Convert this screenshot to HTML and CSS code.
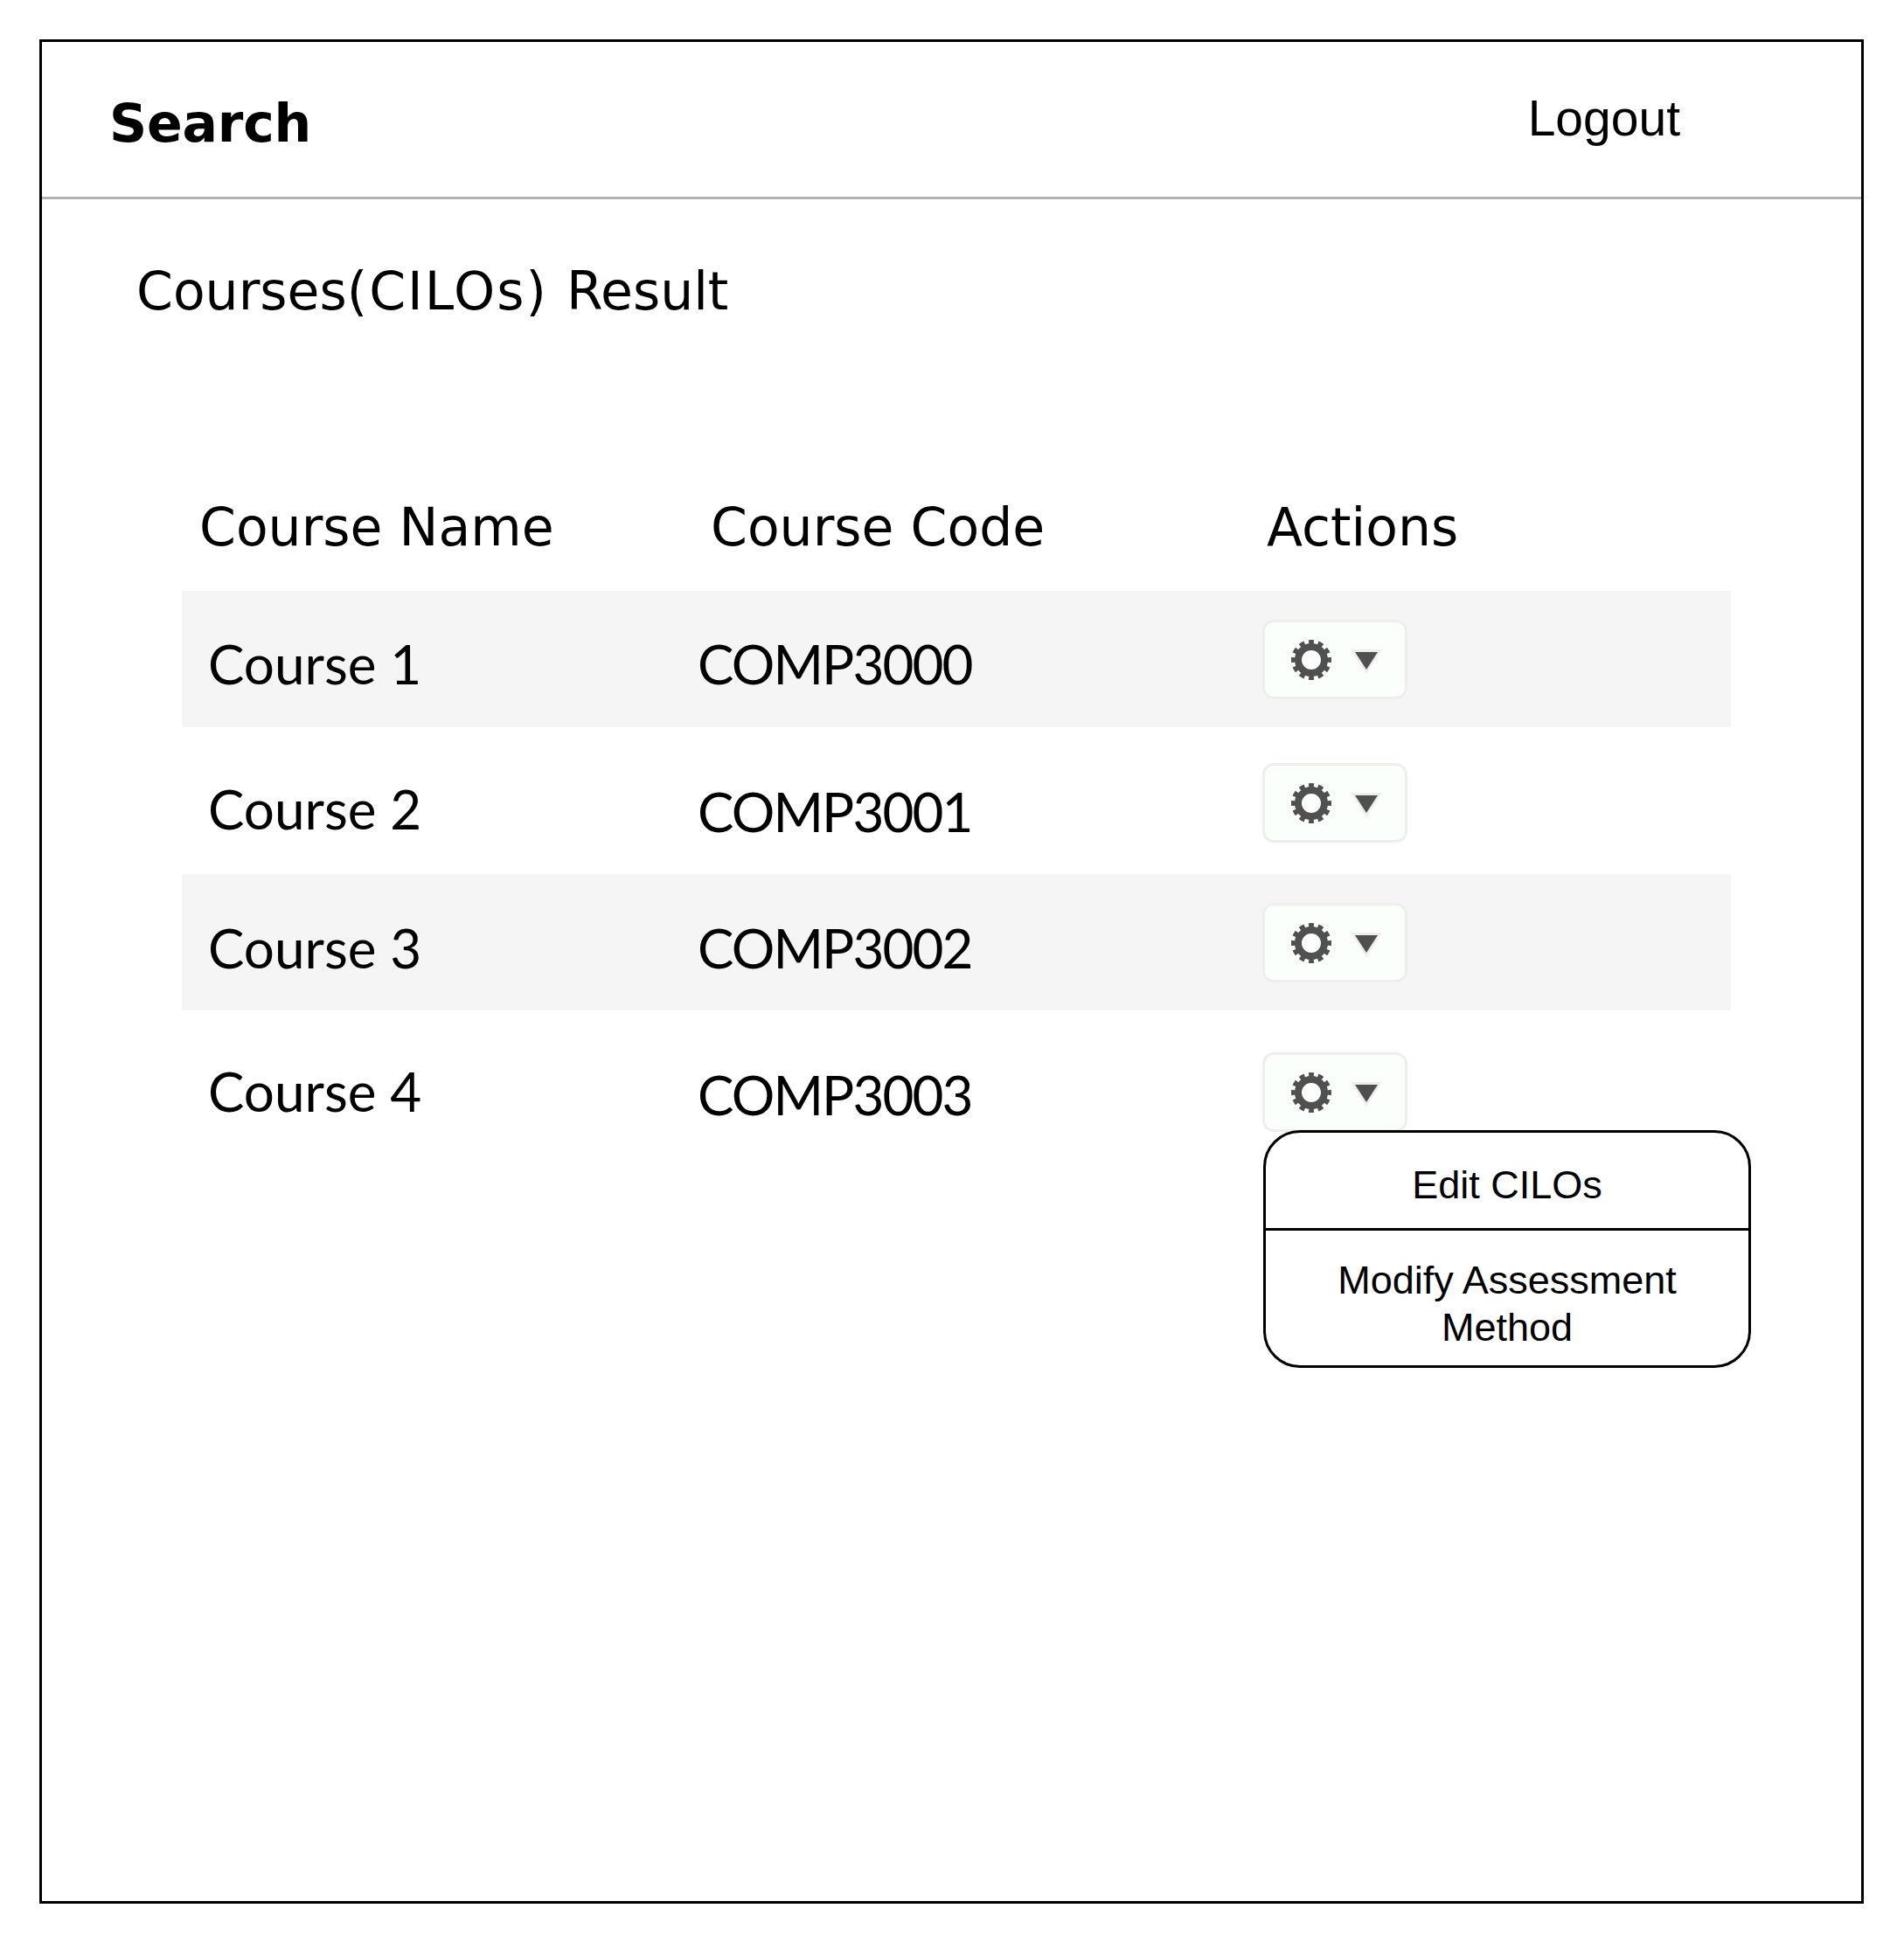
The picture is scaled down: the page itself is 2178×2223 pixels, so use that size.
FILE: index.html
```html
<!DOCTYPE html>
<html lang="en">
<head>
  <meta charset="UTF-8" />
  <meta name="viewport" content="width=device-width, initial-scale=1.0"/>
  <title>Courses Result</title>
  <link rel="stylesheet" href="styles.css">
</head>
<body>

  <svg class="defs" width="0" height="0">
    <symbol id="gear" viewBox="0 0 48 48">
      <circle cx="24" cy="24" r="15" fill="none" stroke="#505050" stroke-width="8"/>
      <circle cx="24" cy="24" r="20.5" fill="none" stroke="#505050" stroke-width="5" pathLength="120" stroke-dasharray="5.6 4.4" stroke-dashoffset="2.8" transform="rotate(-90 24 24)"/>
    </symbol>
    <symbol id="caret" viewBox="0 0 36 30">
      <polygon points="0,1 36,1 18,29" fill="#eeeeee"/>
      <polygon points="5,4 31,4 18,24" fill="#505050"/>
    </symbol>
  </svg>

  <div class="frame">
    <header class="topbar">
      <div class="brand">Search</div>
      <a class="logout">Logout</a>
    </header>

    <h1 class="page-title">Courses<span class="title-paren">(CILOs)</span> Result</h1>

    <div class="table">
      <div class="table-head">
        <div class="col-name">Course Name</div>
        <div class="col-code">Course Code</div>
        <div class="col-actions">Actions</div>
      </div>

      <div class="row row-1 striped">
        <div class="cell-name">Course 1</div>
        <div class="cell-code">COMP3000</div>
        <div class="cell-actions">
          <button class="gear-btn"><svg class="gear"><use href="#gear"/></svg><svg class="caret"><use href="#caret"/></svg></button>
        </div>
      </div>

      <div class="row row-2">
        <div class="cell-name">Course 2</div>
        <div class="cell-code">COMP3001</div>
        <div class="cell-actions">
          <button class="gear-btn"><svg class="gear"><use href="#gear"/></svg><svg class="caret"><use href="#caret"/></svg></button>
        </div>
      </div>

      <div class="row row-3 striped">
        <div class="cell-name">Course 3</div>
        <div class="cell-code">COMP3002</div>
        <div class="cell-actions">
          <button class="gear-btn"><svg class="gear"><use href="#gear"/></svg><svg class="caret"><use href="#caret"/></svg></button>
        </div>
      </div>

      <div class="row row-4">
        <div class="cell-name">Course 4</div>
        <div class="cell-code">COMP3003</div>
        <div class="cell-actions">
          <button class="gear-btn"><svg class="gear"><use href="#gear"/></svg><svg class="caret"><use href="#caret"/></svg></button>
          <div class="menu">
            <div class="menu-item menu-edit">Edit CILOs</div>
            <div class="menu-item menu-modify">Modify Assessment<br>Method</div>
          </div>
        </div>
      </div>
    </div>
  </div>

</body>
</html>
```

FILE: styles.css
```css
body {
  margin: 0;
  background: #fff;
  color: #000;
  font-family: "DejaVu Sans", sans-serif;
}
.defs {
  position: absolute;
}
.frame {
  box-sizing: border-box;
  width: 2087px;
  height: 2133px;
  margin: 45px 0 0 45px;
  border: 3px solid #000;
}
.topbar {
  box-sizing: border-box;
  height: 180px;
  display: flex;
  justify-content: space-between;
  padding: 58px 207px 0 77px;
  border-bottom: 3px solid #b3b3b3;
}
.brand {
  font-size: 60px;
  font-weight: bold;
  line-height: 70px;
  letter-spacing: -0.2px;
}
.logout {
  margin-top: -3px;
  font-family: "Liberation Sans", sans-serif;
  font-size: 57px;
  line-height: 64px;
}
.page-title {
  margin: 70px 0 0 108px;
  font-size: 60px;
  font-weight: normal;
  line-height: 70px;
}
.title-paren {
  margin-right: 2px;
  letter-spacing: 2px;
}
.table {
  margin: 200px 149px 0 160px;
}
.table-head {
  display: flex;
  height: 108px;
  font-size: 60px;
  line-height: 70px;
  padding-left: 20px;
}
.col-name { width: 585px; }
.col-code { width: 636px; }
.row {
  display: flex;
  align-items: flex-start;
  font-family: "Lato", sans-serif;
  font-size: 62px;
  line-height: 70px;
  padding-left: 30px;
}
.striped { background: #f5f5f5; }
.row-1 { height: 156px; }
.row-2 { height: 168px; }
.row-3 { height: 156px; }
.row-4 { height: 200px; }
.cell-name { width: 560px; }
.cell-code {
  width: 646px;
  letter-spacing: -1.9px;
}
.cell-name, .cell-code { padding-top: 48px; }
.row-2 .cell-name { padding-top: 58px; }
.row-2 .cell-code { padding-top: 61px; }
.row-3 .cell-name, .row-3 .cell-code { padding-top: 49px; }
.row-4 .cell-name { padding-top: 57px; }
.row-4 .cell-code { padding-top: 61px; }
.cell-actions {
  position: relative;
  padding-top: 33px;
}
.row-2 .cell-actions { padding-top: 41px; }
.row-4 .cell-actions { padding-top: 48px; }
.gear-btn {
  box-sizing: border-box;
  width: 166px;
  height: 91px;
  display: flex;
  align-items: center;
  padding: 0 0 0 29px;
  gap: 21px;
  background: #fafffc;
  border: 3px solid #eeeeee;
  border-radius: 13px;
}
.gear {
  width: 48px;
  height: 48px;
}
.caret {
  width: 36px;
  height: 30px;
  margin-top: 5px;
}
.menu {
  position: absolute;
  top: 137px;
  left: 1px;
  box-sizing: border-box;
  width: 558px;
  height: 272px;
  background: #fff;
  border: 3px solid #000;
  border-radius: 42px;
  font-family: "Liberation Sans", sans-serif;
  font-size: 45px;
  line-height: 54px;
  text-align: center;
}
.menu-edit {
  box-sizing: border-box;
  height: 112px;
  padding-top: 33px;
  border-bottom: 3px solid #000;
}
.menu-modify {
  padding-top: 30px;
}
```
